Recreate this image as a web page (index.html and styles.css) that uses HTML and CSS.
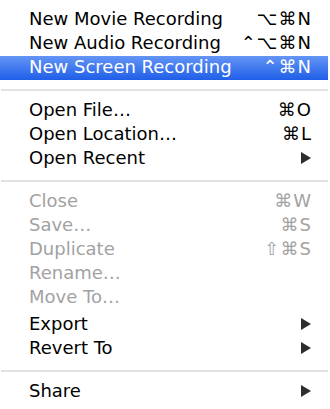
FILE: index.html
```html
<!DOCTYPE html>
<html lang="en">
<head>
  <meta charset="UTF-8" />
  <title>File Menu</title>
  <link rel="stylesheet" href="styles.css">
</head>
<body>

  <ul class="menu">
    <li class="item"><span class="label">New Movie Recording</span><span class="keys">⌥⌘N</span></li>
    <li class="item"><span class="label">New Audio Recording</span><span class="keys">⌃⌥⌘N</span></li>
    <li class="item selected"><span class="label">New Screen Recording</span><span class="keys">⌃⌘N</span></li>

    <li class="sep"></li>

    <li class="item"><span class="label">Open File…</span><span class="keys">⌘O</span></li>
    <li class="item"><span class="label">Open Location…</span><span class="keys">⌘L</span></li>
    <li class="item"><span class="label">Open Recent</span><svg class="arrow" viewBox="0 0 10 12"><path d="M0 0 L10 6 L0 12 Z"/></svg></li>

    <li class="sep"></li>

    <li class="item disabled"><span class="label">Close</span><span class="keys">⌘W</span></li>
    <li class="item disabled"><span class="label">Save…</span><span class="keys">⌘S</span></li>
    <li class="item disabled"><span class="label">Duplicate</span><span class="keys">⇧⌘S</span></li>
    <li class="item disabled"><span class="label">Rename…</span></li>
    <li class="item disabled"><span class="label">Move To…</span></li>
    <li class="item spaced"><span class="label">Export</span><svg class="arrow" viewBox="0 0 10 12"><path d="M0 0 L10 6 L0 12 Z"/></svg></li>
    <li class="item"><span class="label">Revert To</span><svg class="arrow" viewBox="0 0 10 12"><path d="M0 0 L10 6 L0 12 Z"/></svg></li>

    <li class="sep"></li>

    <li class="item"><span class="label">Share</span><svg class="arrow" viewBox="0 0 10 12"><path d="M0 0 L10 6 L0 12 Z"/></svg></li>
  </ul>

</body>
</html>
```

FILE: styles.css
```css
body {
  margin: 0;
  background: #ffffff;
  font-family: 'DejaVu Sans', sans-serif;
  color: #000000;
}

.menu {
  list-style: none;
  margin: 0;
  padding: 8px 0 0;
  width: 328px;
}

.item {
  box-sizing: border-box;
  display: flex;
  align-items: center;
  justify-content: space-between;
  height: 24px;
  padding: 0 16px 2px 29px;
  font-size: 18px;
  line-height: 22px;
}

.item.spaced {
  margin-top: 3px;
}

.item.selected {
  background: linear-gradient(#6495f5, #1f5ee8);
  color: #ffffff;
}

.item.disabled {
  color: #a2a2a2;
}

.keys {
  letter-spacing: 1px;
}

.arrow {
  width: 10px;
  height: 12px;
  margin-right: 1px;
  fill: #2e2e2e;
}

.sep {
  height: 19px;
  display: flex;
  align-items: center;
}

.sep::before {
  content: "";
  flex: 1;
  height: 2px;
  margin: 0 0 0 1px;
  background: #e2e2e2;
}
```
